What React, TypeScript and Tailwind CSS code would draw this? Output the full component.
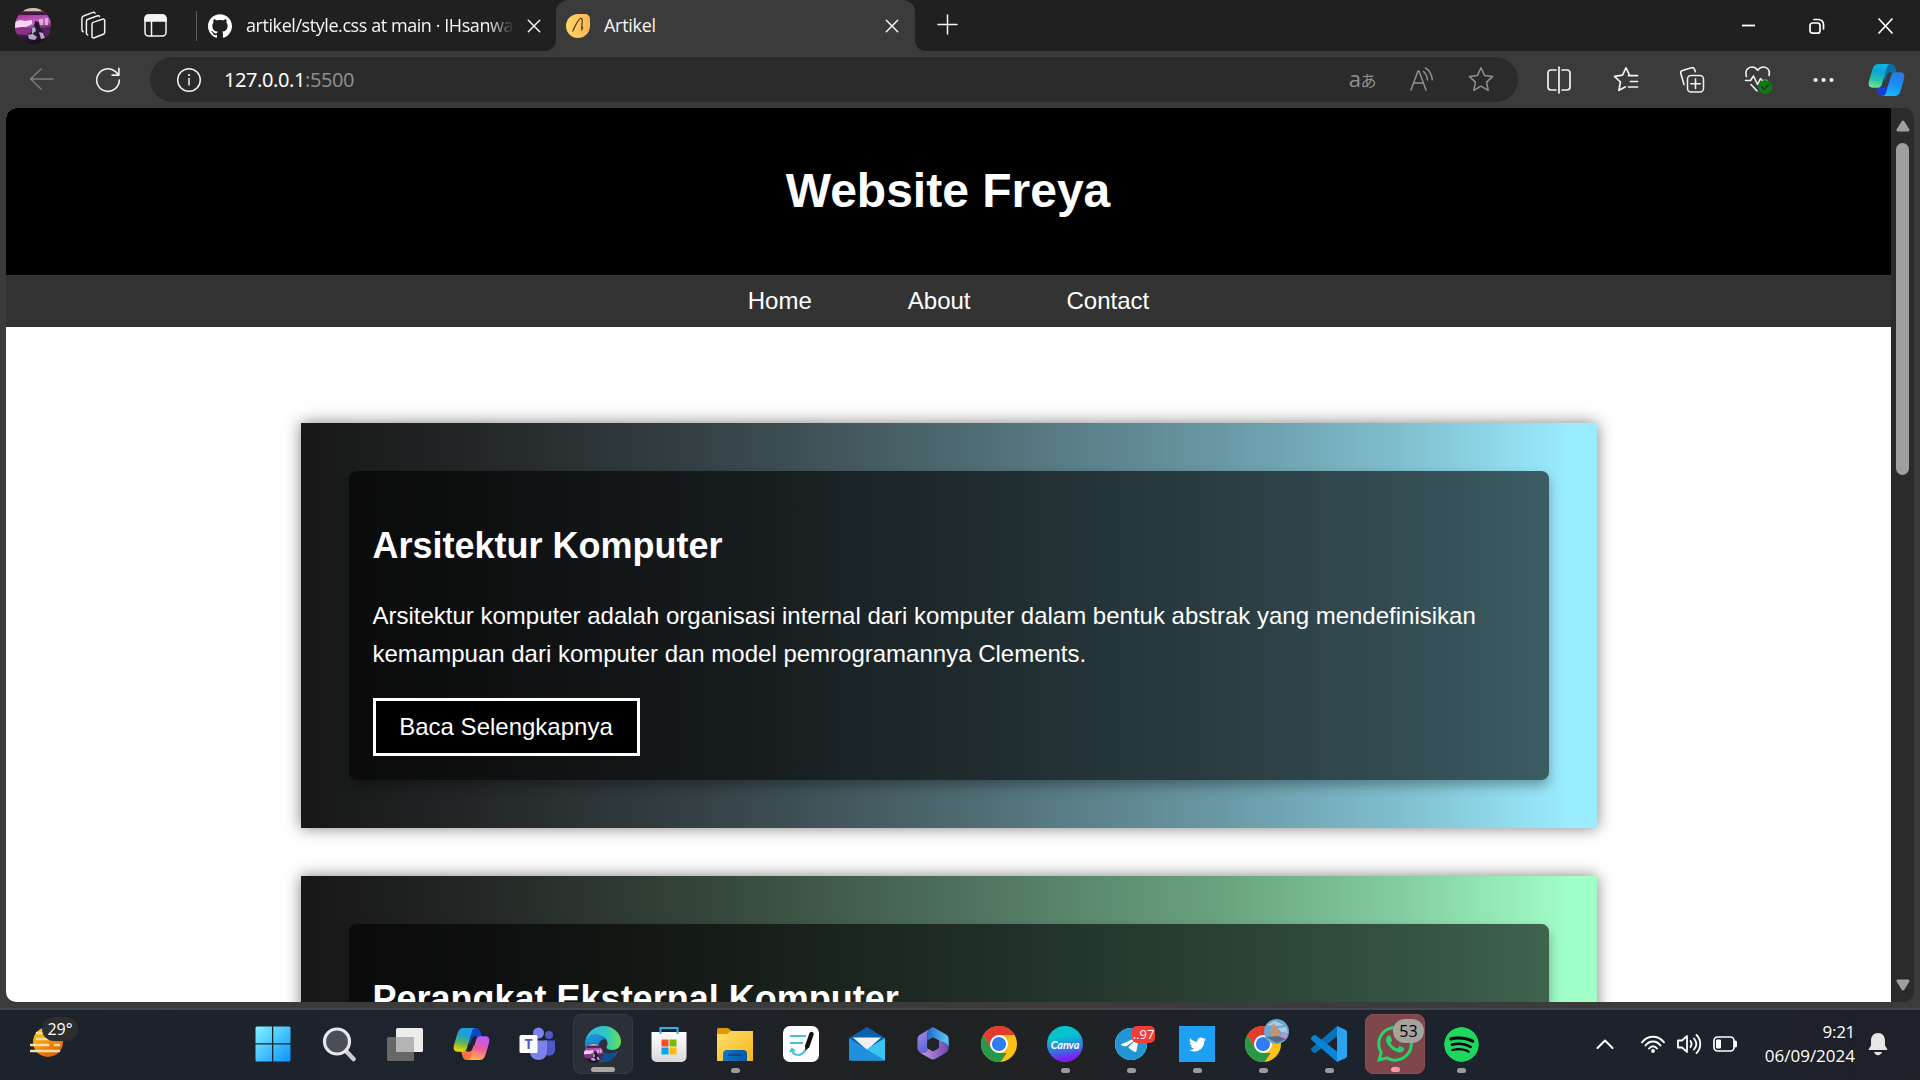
import React from 'react';
import { SiGithub, SiWhatsapp, SiSpotify, SiTelegram } from 'react-icons/si';
import { FaTwitter } from 'react-icons/fa';

type Kids = { children?: React.ReactNode };

function Svg({ w = 24, h = 24, vb, className = '', children }: { w?: number; h?: number; vb?: string; className?: string } & Kids) {
  return (
    <svg width={w} height={h} viewBox={vb ?? `0 0 ${w} ${h}`} fill="none" stroke="currentColor" strokeWidth={1.5} strokeLinecap="round" strokeLinejoin="round" className={`block shrink-0 ${className}`}>
      {children}
    </svg>
  );
}

function Portrait({ size }: { size: number }) {
  return (
    <svg width={size} height={size} viewBox="0 0 36 36" className="block">
      <defs>
        <clipPath id={`pc${size}`}><circle cx="18" cy="18" r="18" /></clipPath>
        <filter id={`pf${size}`}><feGaussianBlur stdDeviation="0.7" /></filter>
        <linearGradient id={`pg${size}`} x2="0.15" y2="1">
          <stop offset="0" stopColor="#4a1c45" /><stop offset="0.25" stopColor="#a8409f" /><stop offset="0.5" stopColor="#c66cc0" /><stop offset="0.68" stopColor="#4a2452" /><stop offset="1" stopColor="#1b0e22" />
        </linearGradient>
      </defs>
      <g clipPath={`url(#pc${size})`}>
        <rect width="36" height="36" fill={`url(#pg${size})`} />
        <g filter={`url(#pf${size})`}>
          <path d="M9 0h17v3H9z" fill="#c9c2ae" />
          <path d="M3 4h31v3H3z" fill="#45183f" />
          <path d="M0 14l5-2 5 1 7-1v4l-6 3-11 1z" fill="#f7d2f3" />
          <path d="M24 11h4v6h-4zM30 10h3v7h-3z" fill="#e2a6de" />
          <path d="M0 20l8-1 6 1 3 3-5 4-12-1z" fill="#8b2f86" />
          <path d="M20 13l4 1 1 5 3 6-3 5-6-1-2-6 2-5z" fill="#2a1633" />
          <path d="M17 20l3-1 1 4-4 3zM24 24l4 1 2 5-4 1zM13 27l5-1 4 3-2 3-6-1z" fill="#b5a9c9" />
          <path d="M28 20l8 2v8l-6-2z" fill="#5b2260" />
        </g>
      </g>
    </svg>
  );
}

function Close({ size = 14 }: { size?: number }) {
  return <Svg w={size} h={size} vb="0 0 14 14"><path d="M1.3 1.3l11.4 11.4M12.7 1.3L1.3 12.7" /></Svg>;
}

function TabStrip() {
  return (
    <div className="flex h-[51px] bg-[#202020] text-[#f5f5f5]">
      <div className="flex w-[197px] shrink-0 items-center">
        <div className="ml-[15px]"><Portrait size={36} /></div>
        <div className="ml-[29px]">
          <Svg w={26} h={30} className="text-[#f0f0f0]">
            <path d="M13 11.400l9.500-3.200c1.200-.4 2.200.2 2.200 1.500v11.500c0 1-.4 1.700-1.400 2.100l-9 3.500c-1.300.5-2.300-.2-2.300-1.400V13.200c0-.9.3-1.500 1-1.800z" />
            <path d="M19.500 5.500c-.3-.8-1-1-1.800-.7L8 8.300c-1 .4-1.600 1-1.600 2V22c0 1 .4 1.600 1.200 1.900" />
            <path d="M15 2.200c-.4-.9-1.200-1.100-2-.8L3.500 5c-1 .4-1.600 1.100-1.600 2.200v11.600c0 1 .4 1.600 1.200 1.900" />
          </Svg>
        </div>
        <div className="ml-[38px]">
          <Svg w={23} h={23}>
            <rect x="1" y="1" width="21" height="21" rx="3.5" />
            <path d="M1 7V4.500A3.500 3.500 0 0 1 4.500 1h14A3.500 3.500 0 0 1 22 4.500V7z" fill="currentColor" />
            <path d="M7.500 7v15" />
          </Svg>
        </div>
        <div className="ml-auto h-[30px] w-[1.5px] bg-[#5c5c5c]" />
      </div>
      <div className="flex w-[359px] shrink-0 items-center">
        <SiGithub className="ml-[11px] size-6 shrink-0 text-white" />
        <div className="ml-[14px] w-[268px] overflow-hidden whitespace-nowrap font-['Open_Sans','Noto_Sans',sans-serif] text-[18px] tracking-[-0.43px] [mask-image:linear-gradient(to_right,black_242px,transparent_268px)]">artikel/style.css at main · IHsanwarsito</div>
        <div className="ml-[13px]"><Close /></div>
      </div>
      <div className="relative flex w-[359px] shrink-0 items-center rounded-t-[12px] bg-[#3b3b3b]">
        <div className="absolute bottom-0 -left-[10px] size-[10px] bg-[radial-gradient(circle_at_0_0,transparent_9.5px,#3b3b3b_10px)]" />
        <div className="absolute bottom-0 -right-[10px] size-[10px] bg-[radial-gradient(circle_at_100%_0,transparent_9.5px,#3b3b3b_10px)]" />
        <svg width="24" height="24" viewBox="0 0 24 24" className="ml-[10px] block">
          <defs><linearGradient id="fav"><stop stopColor="#ffd766" /><stop offset="1" stopColor="#ffb457" /></linearGradient></defs>
          <path d="M12 0h7a5 5 0 0 1 5 5v7a12 12 0 1 1-12-12z" fill="url(#fav)" />
          <path d="M6.500 17.500C9 13 12 4.500 15 4.200c2-.1 1 5 .8 8-.1 1.600-.3 3 .2 4.300M15.800 12l.9 2.500" fill="none" stroke="#3a2c12" strokeWidth="1.1" />
        </svg>
        <span className="ml-[14px] font-['Open_Sans','Noto_Sans',sans-serif] text-[18px] tracking-[-0.3px]">Artikel</span>
        <div className="ml-auto mr-[16px]"><Close /></div>
      </div>
      <div className="ml-[22px] flex items-center pb-[2px]"><Svg w={21} h={21}><path d="M10.500 1v19M1 10.500h19" /></Svg></div>
      <div className="ml-auto mr-[27px] flex items-center gap-[53px] text-white">
        <Svg w={15} h={16}><path d="M1 7.500h13" strokeWidth="1.8" strokeLinecap="butt" /></Svg>
        <Svg w={16} h={16}><rect x="1" y="5" width="10" height="10.2" rx="2.5" strokeWidth="1.7" /><path d="M5 1.500h4.500a5 5 0 0 1 5 5V11" strokeWidth="1.7" /></Svg>
        <Svg w={15} h={16}><path d="M1 1l13 14M14 1L1 15" strokeWidth="1.7" /></Svg>
      </div>
    </div>
  );
}

function CopilotGlyph({ colorful = false }: { colorful?: boolean }) {
  const id = colorful ? 'cw' : 'ce';
  const c = colorful
    ? { a: ['#1c9ce5', '#1e9fd0', '#65b94c', '#f4d800'], b: ['#b35cff', '#ee5aa0', '#ffb44a'], t: '#1044c8', u: '#ff7342' }
    : { a: ['#10b4e4', '#0aa7d8', '#22c0b0', '#6be38f'], b: ['#2d78e0', '#188ef2', '#1ab8ff'], t: '#0c6ea0', u: '#1a3fd0' };
  return (
    <svg width="37" height="34" viewBox="0 0 37 34" className="block">
      <defs>
        <linearGradient id={`${id}a`} x1="0.6" y1="0" x2="0.4" y2="1">{c.a.map((s, i) => <stop key={s} offset={i / 3} stopColor={s} />)}</linearGradient>
        <linearGradient id={`${id}b`} x1="0.6" y1="0" x2="0.4" y2="1">{c.b.map((s, i) => <stop key={s} offset={i / 2} stopColor={s} />)}</linearGradient>
      </defs>
      <path d="M14 1h9c3 0 4 2 4.800 5l1.200 4h-5c-2.500 0-3.500 1.500-4.500 4l-3 6z" fill={c.t} />
      <path d="M23 33h-9c-3 0-4-2-4.800-5L8 24h5c2.500 0 3.500-1.500 4.500-4l3-6z" fill={c.u} />
      <path d="M10.500 1H23c-2.500 0-3.600 1.500-4.300 4L14 21c-.8 2.700-2.200 3.700-4.500 3.700H5c-4 0-5-2.700-4-6.700L4.500 6C5.500 3 7.300 1 10.500 1z" fill={`url(#${id}a)`} />
      <path d="M26.500 33H14c2.500 0 3.600-1.500 4.300-4L23 13c.8-2.700 2.200-3.700 4.500-3.700H32c4 0 5 2.700 4 6.700L32.500 28c-1 3-2.800 5-6 5z" fill={`url(#${id}b)`} />
      <path d="M15.500 20l4-9c.5-1.200 1.300-1.700 2.700-1.700h1.600L20 20.500c-.8 2.500-1.800 4.200-4.500 4.200h-1.500z" fill={colorful ? '#1e232b' : '#3b3b3b'} />
    </svg>
  );
}

function Toolbar() {
  return (
    <div className="flex h-[57px] items-center bg-[#3b3b3b] text-[#f2f2f2]">
      <Svg w={26} h={24} className="mb-px ml-[29px] text-[#7d7d7d]"><path d="M24 12H2M12 2L1.500 12 12 22" /></Svg>
      <Svg w={26} h={26} className="ml-[40px]"><path d="M24.300 13A11.300 11.300 0 1 1 20.500 4.600l3.300 3.200M23.900 1.200v6.900h-6.800" strokeWidth="1.6" /></Svg>
      <div className="ml-[29px] flex h-[45px] w-[1368px] items-center rounded-full bg-[#2b2b2b]">
        <Svg w={26} h={26} className="ml-[26px]"><circle cx="13" cy="13" r="11.3" /><path d="M13 11.500v6.500" /><circle cx="13" cy="8" r=".7" fill="currentColor" strokeWidth=".8" /></Svg>
        <div className="ml-[22px] font-['Noto_Sans',sans-serif] text-[20px] tracking-[-0.42px] text-white">127.0.0.1<span className="text-[#8b8b8b]">:5500</span></div>
        <div className="mr-[24px] mb-[2px] ml-auto flex items-center text-[#919191]">
          <span className="-mt-[2px] flex items-baseline font-['Open_Sans',sans-serif] text-[22px] leading-none tracking-[-0.5px]">a<span className="font-['Noto_Sans_CJK_JP',sans-serif] text-[16px]">あ</span></span>
          <Svg w={26} h={26} className="ml-[33px]"><path d="M2 24L9 5h1l7 19M4.800 17h9.700M14.500 5.500c2.500 2.300 3.700 5 4 8.500M16.500 1.800c4.500 3 6.300 7 6.800 12" /></Svg>
          <Svg w={26} h={26} className="ml-[33px]"><path d="M13 1.800l3.500 7.600 8.200 1-6.100 5.700 1.600 8.200L13 20.200l-7.200 4.100 1.600-8.200-6.100-5.700 8.200-1z" /></Svg>
        </div>
      </div>
      <Svg w={26} h={28} className="ml-[28px]"><path d="M10 4H5C3 4 2 5 2 7v14c0 2 1 3 3 3h5M16 4h5c2 0 3 1 3 3v14c0 2-1 3-3 3h-5M13 1v26" strokeWidth="1.7" /></Svg>
      <Svg w={26} h={27} className="ml-[41px]"><path d="M16.500 9.200L13 1.800 9.500 9.200l-8 1.200 5.900 5.600-1.500 8.300 6.300-3.300M15.500 9.700h9M17.500 15.500h7M15.500 21h9" strokeWidth="1.7" /></Svg>
      <Svg w={27} h={28} className="ml-[40px]"><rect x="8.5" y="9.5" width="16" height="16.5" rx="3.5" /><path d="M16.500 13v9.500M11.800 17.700h9.500M5 18.500L1.800 7.600c-.4-1.600.3-2.600 1.700-3L12.500 1.700c1.500-.4 2.500.1 3 1.500l.8 2.500" strokeWidth="1.6" /></Svg>
      <Svg w={28} h={29} className="ml-[38px]">
        <path d="M2.400 11.500C.5 5 4.500 2 8 2c2.500 0 4.500 1.300 5.700 3.200C15 3.300 17 2 19.500 2c4 0 7 3.500 5.500 8.500M7 19.500l6 6.500M1.500 15.500h5l3-4.500 4 8.500 3-6 1.500 2h5" strokeWidth="1.6" />
        <circle cx="21.2" cy="22" r="7" fill="#107c10" stroke="none" /><path d="M18 22l2.300 2.400 4-4.700" stroke="#2b332b" />
      </Svg>
      <Svg w={21} h={8} className="ml-[41px]"><g fill="currentColor" stroke="none"><circle cx="2.5" cy="4" r="2.1" /><circle cx="10.5" cy="4" r="2.1" /><circle cx="18.5" cy="4" r="2.1" /></g></Svg>
      <div className="ml-[34px]"><CopilotGlyph /></div>
    </div>
  );
}

function Card({ title, tone, children }: { title: string; tone: string } & Kids) {
  return (
    <section className={`w-[1296px] shrink-0 p-12 shadow-[0_0_15px_rgba(0,0,0,0.5)] ${tone}`}>
      <div className="h-[309px] rounded-[7.5px] bg-black/60 p-6 text-white shadow-[0_6px_12px_rgba(0,0,0,0.3)]">
        <h2 className="mt-[22px] text-[36px] leading-[58px] font-bold">{title}</h2>
        {children}
      </div>
    </section>
  );
}

function Page() {
  return (
    <div className="mx-[6px] flex h-[894px] w-[1908px] overflow-hidden rounded-[10px] bg-[#2b2b2b]">
      <main className="flex w-[1885px] flex-col items-center overflow-hidden bg-white font-['Liberation_Sans',Arial,sans-serif]">
        <header className="flex h-[167px] w-full shrink-0 items-center justify-center bg-black"><h1 className="mr-px mb-px text-[48px] leading-[76px] font-bold text-white">Website Freya</h1></header>
        <nav className="flex h-[52px] w-full shrink-0 items-center justify-center gap-24 bg-[#333333] text-[24px] text-white"><a>Home</a><a>About</a><a>Contact</a></nav>
        <div className="mt-24 flex flex-col gap-12">
          <Card title="Arsitektur Komputer" tone="bg-linear-[to_right,#171717,#222627_13%,#354145_31%,#4e6a71_51%,#6998a5_71%,#80bfce_85%,#9aecff_98%]">
            <p className="mt-[22px] text-[24px] leading-[38.4px]">Arsitektur komputer adalah organisasi internal dari komputer dalam bentuk abstrak yang mendefinisikan<br />kemampuan dari komputer dan model pemrogramannya Clements.</p>
            <button className="mt-[24px] block h-[58px] w-[267px] border-[3px] border-white bg-black text-[24px] leading-[52px]">Baca Selengkapnya</button>
          </Card>
          <Card title="Perangkat Eksternal Komputer" tone="bg-linear-[to_right,#171717,#222624_13%,#354539_31%,#4e715d_51%,#69a380_71%,#84cda2_85%,#a1ffc8_98%]" />
        </div>
      </main>
      <div className="flex w-[23px] flex-col items-center justify-between pt-[12px] pb-[11px] text-[#9f9f9f]">
        <Svg w={14} h={12}><path d="M7 2L2 10h10z" fill="currentColor" strokeWidth="3" /></Svg>
        <div className="mt-[11px] mb-auto h-[332px] w-[13px] rounded-full bg-[#9f9f9f]" />
        <Svg w={14} h={12}><path d="M7 10L2 2h10z" fill="currentColor" strokeWidth="3" /></Svg>
      </div>
    </div>
  );
}

function Chrome({ id }: { id: string }) {
  return (
    <svg width="36" height="36" viewBox="0 0 36 36" className="block">
      <defs><clipPath id={id}><circle cx="18" cy="18" r="18" /></clipPath></defs>
      <g clipPath={`url(#${id})`}>
        <rect width="36" height="36" fill="#fbc116" />
        <path d="M0 6l2.400 3 7.800 13.500L18 27h7.800L18 38H-2z" fill="#279847" />
        <path d="M18 9h18V0H0l2.400 9 7.800 13.500z" fill="#e33b2e" />
      </g>
      <circle cx="18" cy="18" r="9" fill="#fff" /><circle cx="18" cy="18" r="7.1" fill="#2f7bf0" />
    </svg>
  );
}

const Start = () => (
  <svg width="36" height="36" viewBox="0 0 36 36"><defs><linearGradient id="win" x1="0" y1="0" x2="1" y2="1"><stop stopColor="#82f3ff" /><stop offset="1" stopColor="#0a94fb" /></linearGradient></defs>
    <path d="M2 .5h15v16.700H.5V2A1.500 1.500 0 0 1 2 .5zM18.300 .5H34A1.500 1.500 0 0 1 35.500 2v15.200H18.300zM.5 18.500H17v17H2A1.500 1.500 0 0 1 .5 34zM18.300 18.500h17.200V34a1.500 1.500 0 0 1-1.500 1.500H18.300z" fill="url(#win)" /></svg>
);
const Search = () => (
  <svg width="34" height="36" viewBox="0 0 34 36"><path d="M24 25l7.500 8" stroke="#c9cdd0" strokeWidth="4.5" strokeLinecap="round" /><circle cx="15" cy="15.500" r="12.5" fill="#4a4f57" stroke="#e6e8e9" strokeWidth="3.2" /></svg>
);
const TaskView = () => (
  <svg width="36" height="36" viewBox="0 0 36 36"><rect y="11" width="27" height="24" rx="1.5" fill="#676767" /><rect x="9" y="2" width="27" height="24" rx="1.5" fill="#ececec" /><path d="M9 11h18v15H10.500A1.500 1.500 0 0 1 9 24.500z" fill="#b4b4b4" /></svg>
);
const Teams = () => (
  <svg width="36" height="36" viewBox="0 0 36 36"><circle cx="30" cy="9" r="4" fill="#4f58c6" /><circle cx="19.5" cy="7" r="5.5" fill="#7b83eb" /><path d="M25 14.500h11V24a6 6 0 0 1-9 5z" fill="#4f58c6" /><path d="M12 14.500h16V25c0 5-3 9-8.500 9S11 30 11 26z" fill="#7b83eb" /><rect x=".5" y="9" width="18" height="18" rx="1.5" fill="#fff" /><text x="9.500" y="23" textAnchor="middle" fontFamily="Open Sans" fontWeight="700" fontSize="14" fill="#4f58c6">T</text></svg>
);
const Edge = () => (
  <svg width="36" height="36" viewBox="0 0 36 36"><defs><linearGradient id="eg1"><stop stopColor="#2fb4ea" /><stop offset=".6" stopColor="#2fc7c0" /><stop offset="1" stopColor="#6ce052" /></linearGradient><linearGradient id="eg2" x1="0" y1="0" x2=".6" y2="1"><stop stopColor="#1e9fe0" /><stop offset="1" stopColor="#0f5db0" /></linearGradient></defs>
    <path d="M0 18C0 13 5 8.500 12 8.500c4 0 8 2 9 5-4-1-7 2-7 6 0 6 6 9 12 8 3-.5 5-1.500 7-2.500C30 32 25 36 18 36 8 36 0 28 0 18z" fill="url(#eg2)" />
    <path d="M14 19c0 8 10 11 18.500 6.500C29.500 32 25 36 18 36c-7-3-9-11-4-17z" fill="#0f4f91" />
    <path d="M0 17C1 7 9 0 18.500 0 29 0 36 8 36 15.500c0 5-4 8.500-9 8.500-3 0-5.500-1-5.500-2.500 0-1 1-1.500 1-4C22.500 12 17 8.500 11 8.500 6 8.500 2 11.500 0 17z" fill="url(#eg1)" /></svg>
);
const Store = () => (
  <svg width="36" height="37" viewBox="0 0 36 37"><defs><linearGradient id="stg" x2="0" y2="1"><stop stopColor="#fff" /><stop offset="1" stopColor="#d9d9d9" /></linearGradient></defs><path d="M.5 6h35v25a5 5 0 0 1-5 5h-25a5 5 0 0 1-5-5z" fill="url(#stg)" /><path d="M9.500 8V2h17v6" fill="none" stroke="#28b6ea" strokeWidth="2" /><path d="M10.500 13.500h7v7h-7z" fill="#f25022" /><path d="M18.500 13.500h7v7h-7z" fill="#7fba00" /><path d="M10.500 21.500h7v7h-7z" fill="#00a4ef" /><path d="M18.500 21.500h7v7h-7z" fill="#ffb900" /></svg>
);
const Folder = () => (
  <svg width="36" height="36" viewBox="0 0 36 36"><defs><linearGradient id="fo" x2="1" y2="1"><stop stopColor="#ffdf6b" /><stop offset="1" stopColor="#f6b71d" /></linearGradient><linearGradient id="fb" x2="1"><stop stopColor="#0e79c9" /><stop offset="1" stopColor="#0757a3" /></linearGradient></defs><path d="M0 3.500A1.500 1.500 0 0 1 1.500 2H11l5 4v5H0z" fill="#dc9908" /><path d="M0 8h10l4-3h22v30H0z" fill="url(#fo)" /><path d="M6 35V28a4 4 0 0 1 4-4h16a4 4 0 0 1 4 4v7z" fill="url(#fb)" /><path d="M11 29h14" stroke="#07427e" strokeWidth="1.5" /></svg>
);
const Journal = () => (
  <svg width="36" height="36" viewBox="0 0 36 36"><rect width="36" height="36" rx="7" fill="#fff" /><path d="M7 10h16M7 17h13" stroke="#4cbfdb" strokeWidth="2" /><path d="M9 24c1 6 10 7 13 0M7 26l2-3 3 2" fill="none" stroke="#4cbfdb" strokeWidth="2" /><path d="M28.500 8l-4.200 12" stroke="#111" strokeWidth="4.5" strokeLinecap="round" /><path d="M22.300 19l-.2 6 4-3.700z" fill="#111" /></svg>
);
const Mail = () => (
  <svg width="36" height="36" viewBox="0 0 36 36"><path d="M0 12L18 1l18 11-18 15z" fill="#0860ae" /><path d="M4 11.500h28L18 24z" fill="#f0f0f0" /><path d="M36 12v22.500H2L18 23z" fill="#39c4f3" /><path d="M0 34.500V12l18 11.500L36 34.500z" fill="#1f91dc" /></svg>
);
const M365 = () => (
  <svg width="32" height="36" viewBox="0 0 32 36"><defs><linearGradient id="ma" x2=".4" y2="1"><stop stopColor="#b08ff0" /><stop offset="1" stopColor="#5967cf" /></linearGradient><linearGradient id="mb"><stop stopColor="#2a66c4" /><stop offset="1" stopColor="#56cdf8" /></linearGradient><linearGradient id="mc"><stop stopColor="#c49af0" /><stop offset="1" stopColor="#6b4aa8" /></linearGradient></defs>
    <path d="M16 1l-3.500 2c-1.500 1-2 2.500-2 4.500v15c0 3.500-3 5.500-6.500 4.500l-1-.6C1.500 25.500 .5 24 .5 22V13c0-2 1-3.500 2.500-4.300z" fill="url(#ma)" />
    <path d="M12.500 3L16 1l13 7.500c1.500.9 2.500 2.300 2.500 4.200v7.800l-9.500-6-6-3-5.500 3V7c0-1.800.7-3.200 2-4z" fill="url(#mb)" />
    <path d="M31.500 18v4.500c0 2-1 3.300-2.500 4.200l-10 5.800c-2 1.200-4 1.200-6 0L3 26.700c5 1.300 7.500-.7 7.500-4.200l5.500 3 6-3.500v-8c5 1 9 1 9.500 4z" fill="url(#mc)" />
    <path d="M22 14.500c5 1 9.500 4 9.500 6v-7.800z" fill="#4fc3f5" />
    <path d="M16 11.500l5.800 3.300v6.500L16 24.700l-5.800-3.400v-6.500z" fill="#20242a" /></svg>
);
const Canva = () => (
  <div className="flex size-9 items-center justify-center rounded-full bg-linear-[170deg,#05c4cf_30%,#2e7de0_60%,#7a22ef_85%] font-['Lato',sans-serif] text-[11px] leading-none font-bold text-white italic tracking-[-0.1px]">Canva</div>
);
const VsCode = () => (
  <svg width="36" height="36" viewBox="0 0 36 36"><path d="M26 0v10.500L5 26.500c-1 .8-2 .6-2.800 0L.7 25c-.9-.9-.9-2 0-2.900z" fill="#0a70b8" /><path d="M26 36V25.500L5 9.500c-1-.8-2-.6-2.800 0L.7 11c-.9.9-.9 2 0 2.900z" fill="#0b84d3" /><path d="M26 0l8.300 3.700C35.500 4.300 36 5 36 6.500v23c0 1.500-.5 2.200-1.700 2.800L26 36z" fill="#29a3ed" /></svg>
);
const Badge = ({ children, className }: Kids & { className: string }) => (
  <span className={`absolute flex items-center justify-center font-['Open_Sans',sans-serif] leading-none ${className}`}>{children}</span>
);

const apps: { icon: React.ReactNode; dot?: boolean; tile?: string; bar?: string }[] = [
  { icon: <Start /> }, { icon: <Search /> }, { icon: <TaskView /> }, { icon: <CopilotGlyph colorful /> }, { icon: <Teams /> },
  { icon: <><Edge /><div className="absolute -bottom-px -left-px"><Portrait size={19} /></div></>, tile: 'bg-[#2a2f38] border border-[#363b43]', bar: 'w-6 bg-[#aba8a5]' },
  { icon: <Store /> }, { icon: <Folder />, dot: true }, { icon: <Journal /> }, { icon: <Mail /> }, { icon: <M365 /> }, { icon: <Chrome id="c1" /> },
  { icon: <Canva />, dot: true },
  { icon: <><span className="flex size-9 items-center justify-center"><span className="block size-8 rounded-full bg-white"><SiTelegram className="size-8 text-[#2196d5]" /></span></span><Badge className="top-0 left-[19px] h-[17px] w-[23px] rounded-[5px] bg-[#f33c38] text-[13px] text-white">..97</Badge></>, dot: true },
  { icon: <span className="flex size-9 items-center justify-center bg-[#1d9ff3]"><FaTwitter className="size-[17px] text-white" /></span>, dot: true },
  { icon: <><Chrome id="c2" /><span className="absolute -top-[7px] left-[19px]"><svg width="25" height="25" viewBox="0 0 25 25"><circle cx="12.5" cy="12.5" r="12.5" fill="#6ba8cf" /><path d="M3 6l8-4 9 4-7 1zM14 9l8-1 2 6-7-1z" fill="#a9cfe3" /><path d="M7 19V8l3-4 3 6 2 1v8z" fill="#c9916f" /><path d="M15 18l7-6 1 7-8 2z" fill="#c48ed0" /><path d="M2 18l12-1 8 3-9 4z" fill="#566b84" /></svg></span></>, dot: true },
  { icon: <VsCode />, dot: true },
  { icon: <><SiWhatsapp className="size-9 text-[#25d366]" /><Badge className="-top-[7px] left-[16px] h-6 w-[31px] rounded-full bg-[#a6a39e] text-[16px] text-black">53</Badge></>, tile: 'bg-[#7f464b] border border-[#8a4e55]', bar: 'w-[9px] bg-[#ff99a4]' },
  { icon: <SiSpotify className="size-[35px] rounded-full bg-black text-[#1fd75f]" />, dot: true },
];

function Taskbar() {
  return (
    <div className="flex h-[70px] items-center bg-linear-[to_right,#1d232c,#1d242d_30%,#202122_46%,#202225_56%,#1c232c_68%,#1c232c_88%,#202029] pb-[2px] font-['Open_Sans','Noto_Sans',sans-serif] text-white">
      <div className="relative ml-[30px] size-[40px]">
        <svg width="36" height="36" viewBox="0 0 36 36"><defs><linearGradient id="sun" x2=".6" y2="1"><stop stopColor="#ffd60a" /><stop offset="1" stopColor="#e4600c" /></linearGradient></defs><circle cx="18" cy="18" r="15" fill="url(#sun)" /><path d="M7 9h12M7 15h13M1 21h17M25 21h4M1 27h28" stroke="#f6dfa6" strokeWidth="2.6" strokeLinecap="round" /></svg>
        <Badge className="-top-[7px] left-[12px] h-6 w-9 rounded-full bg-[#2d2d2d] text-[16px]">29°</Badge>
      </div>
      <div className="ml-[170px] flex">
        {apps.map((a, i) => (
          <div key={i} className="flex w-[66px] justify-center">
            <div className={`relative flex size-[60px] items-center justify-center rounded-[8px] ${a.tile ?? ''}`}>
              <div className="relative">{a.icon}</div>
              {(a.dot || a.bar) && <div className={`absolute bottom-px h-[5px] rounded-full ${a.bar ?? 'w-[9px] bg-[#9a9b9e]'}`} />}
            </div>
          </div>
        ))}
      </div>
      <Svg w={18} h={12} className="ml-[102px]"><path d="M1.500 10L9 2.500 16.500 10" strokeWidth="2" /></Svg>
      <Svg w={26} h={20} className="ml-[26px]"><path d="M2 8.300C8 .8 18 .8 24 8.300M5.500 11.500c4-5.300 11-5.300 15 0M9 14.500c2.500-3 5.500-3 8 0" strokeWidth="1.9" /><circle cx="13" cy="17" r="1.9" fill="currentColor" stroke="none" /></Svg>
      <Svg w={26} h={22} className="ml-[10px]"><path d="M2 7.500h4L11 3v16l-5-4.500H2zM14.500 8c1.500 2 1.500 4 0 6M18 5.500c3 3.500 3 7.500 0 11M20.500 2c5 5 5 13 0 18" strokeWidth="1.8" /></Svg>
      <Svg w={26} h={18} className="ml-[10px]"><rect x="2" y="2" width="20" height="14" rx="3.5" strokeWidth="1.7" /><path d="M23.500 7v4" strokeWidth="3" /><rect x="4" y="4.5" width="5" height="9" rx="1" fill="currentColor" stroke="none" /></Svg>
      <div className="ml-auto mr-[13px] text-right text-[17px] leading-6"><div className="tracking-[-0.3px]">9:21</div><div>06/09/2024</div></div>
      <Svg w={20} h={24} className="mr-[32px] text-[#e6e6e6]"><path d="M10 1C5.500 1 3 4.500 3 8.500v5L.8 17v1h18.400v-1L17 13.500v-5C17 4.500 14.500 1 10 1z" fill="currentColor" stroke="none" /><path d="M6 20h8c-.5 2-2 3.200-4 3.200S6.500 22 6 20z" fill="currentColor" stroke="none" /></Svg>
    </div>
  );
}

export default function App() {
  return (
    <div className="h-[1080px] w-[1920px] overflow-hidden bg-[#3b3b3b]">
      <TabStrip />
      <Toolbar />
      <Page />
      <div className="h-2 border-b-2 border-[#42474d] bg-[#3b3b3b]" />
      <Taskbar />
    </div>
  );
}
